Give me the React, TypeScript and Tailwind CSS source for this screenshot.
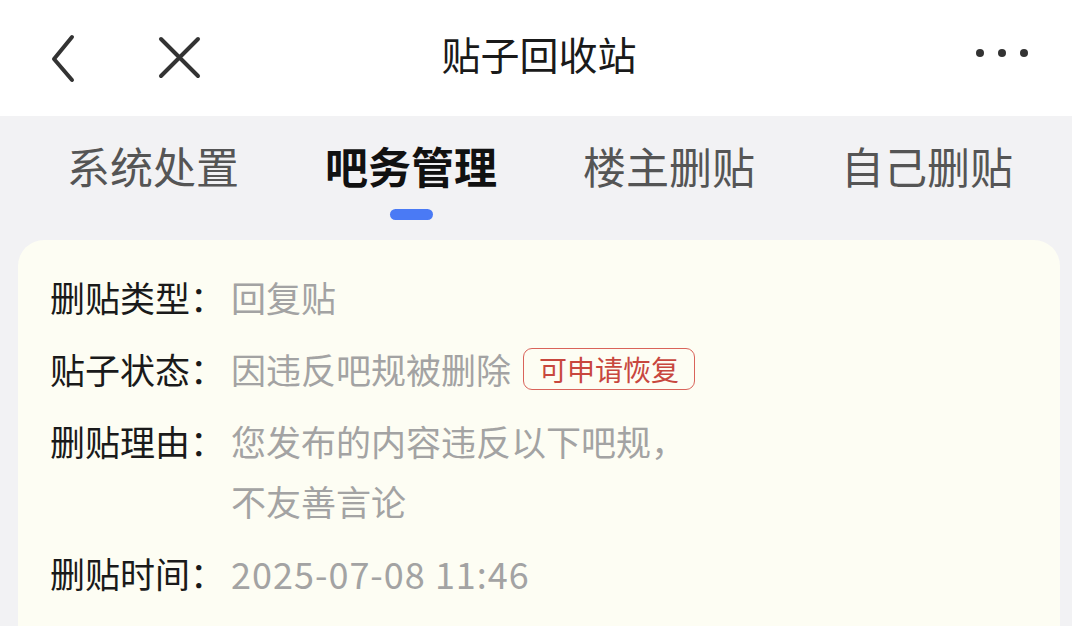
import React from "react";

const font = { fontFamily: '"Noto Sans CJK SC", "Noto Sans", sans-serif' };

function Row({ label, children }: { label: string; children: React.ReactNode }) {
  return (
    <div className="flex items-start">
      <div className="w-[181px] shrink-0 text-[#1a1a1a] leading-[60px]">{label}</div>
      <div className="flex-1 text-[#a3a3a3] leading-[60px]">{children}</div>
    </div>
  );
}

export default function App() {
  const tabs = ["系统处置", "吧务管理", "楼主删贴", "自己删贴"];
  return (
    <div className="w-[1072px] h-[626px] overflow-hidden bg-[#f2f2f4]" style={font}>
      <div className="h-[116px] bg-white flex items-center relative">
        <div className="flex items-center pl-[48px] gap-[80px]">
          <svg width="30" height="50" viewBox="0 0 30 50">
            <path d="M24 4 L6 26 L24 47" fill="none" stroke="#333" strokeWidth="4" strokeLinecap="round" strokeLinejoin="round" />
          </svg>
          <svg width="44" height="44" viewBox="0 0 44 44">
            <path d="M3 3 L40 40 M40 3 L3 40" fill="none" stroke="#333" strokeWidth="4" strokeLinecap="round" />
          </svg>
        </div>
        <div className="absolute left-0 right-0 top-0 h-[116px] flex items-center justify-center pointer-events-none">
          <span className="text-[39px] text-[#1a1a1a] mt-[-10px] ml-[6px]">贴子回收站</span>
        </div>
        <div className="ml-auto pr-[44px] flex gap-[14px] items-center mt-[-10px]">
          <span className="w-[8px] h-[8px] rounded-full bg-[#333]" />
          <span className="w-[8px] h-[8px] rounded-full bg-[#333]" />
          <span className="w-[8px] h-[8px] rounded-full bg-[#333]" />
        </div>
      </div>
      <div className="pl-[24px] pr-[16px] grid grid-cols-4 pt-[19px]">
        {tabs.map((t, i) => (
          <div key={t} className="flex flex-col items-center">
            <span
              className={
                "text-[43px] leading-[60px] " +
                (i === 1 ? "font-bold text-[#111]" : "text-[#555]")
              }
            >
              {t}
            </span>
            <span
              className={
                "mt-[14px] w-[43px] h-[11px] rounded-full " + (i === 1 ? "bg-[#4a7af5]" : "bg-transparent")
              }
            />
          </div>
        ))}
      </div>
      <div className="ml-[18px] mr-[12px] mt-[20px] rounded-t-[26px] bg-[#fdfdf3] px-[32px] pt-[27px] text-[35px] flex flex-col gap-[12px] h-[400px]">
        <Row label="删贴类型：">回复贴</Row>
        <Row label="贴子状态：">
          <span className="flex items-center">
            因违反吧规被删除
            <span className="ml-[12px] inline-flex items-center h-[42px] px-[15px] border border-[#d9635a] rounded-[9px] text-[#c8473e] text-[28px] leading-none">
              可申请恢复
            </span>
          </span>
        </Row>
        <Row label="删贴理由：">
          您发布的内容违反以下吧规，
          <br />
          不友善言论
        </Row>
        <Row label="删贴时间：">
          <span className="tracking-[1px] text-[36px]">2025-07-08 11:46</span>
        </Row>
      </div>
    </div>
  );
}
